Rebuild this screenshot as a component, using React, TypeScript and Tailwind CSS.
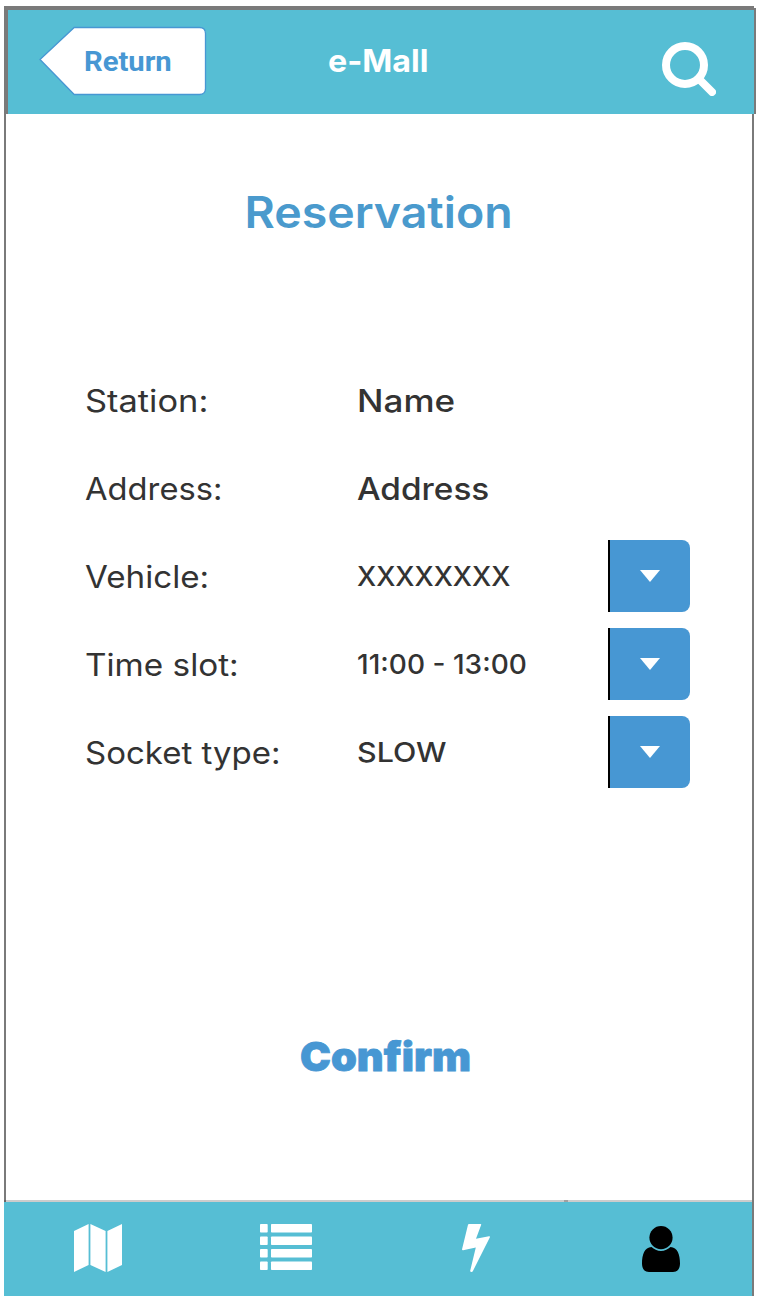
import React from "react";

function MapIcon() {
  return (
    <svg width="48" height="48" viewBox="0 0 48 48" fill="white">
      <path d="M0 7L14.6 0V41L0 48ZM16.4 0L31.6 7V48L16.4 41ZM33.4 7L48 0V41L33.4 48Z" />
    </svg>
  );
}

function ListIcon() {
  return (
    <svg width="52" height="46" viewBox="0 0 52 46" fill="white">
      {[0, 12.5, 25, 37.5].map((y) => (
        <g key={y}>
          <rect x="0" y={y} width="7.7" height="8.5" rx="0.8" />
          <rect x="11" y={y} width="41" height="8.5" rx="0.8" />
        </g>
      ))}
    </svg>
  );
}

function BoltIcon() {
  return (
    <svg width="28" height="48" viewBox="0 0 28 48" fill="white">
      <path d="M7 0H18.7Q19.5 0 19.2 .8L14 14.7L27 12.2Q28.3 12 27.9 13.2L10.8 47.3Q10.4 48 9.6 48Q8 48 8.2 46.8L13.8 23.5L1.1 26.2Q-.2 26.4 .1 25L6 .8Q6.2 0 7 0Z" />
    </svg>
  );
}

function UserIcon() {
  return (
    <svg width="38" height="46" viewBox="0 0 38 46" fill="black">
      <circle cx="19" cy="11.6" r="11.6" />
      <path d="M9.5 21C12 23.4 15.2 24.9 19 24.9S26 23.4 28.5 21C35.5 21.3 38 28.5 38 37.5C38 42.7 35.5 46 31 46H7C2.5 46 0 42.7 0 37.5C0 28.5 2.5 21.3 9.5 21Z" />
    </svg>
  );
}

type RowProps = { label: string; labelFit: string; value: string; valueFit: string; select?: boolean };

const rows: RowProps[] = [
  { label: "Station:", labelFit: "scale-x-[1.11]", value: "Name", valueFit: "scale-x-[1.13]" },
  { label: "Address:", labelFit: "scale-x-[1.055]", value: "Address", valueFit: "scale-x-[1.075]" },
  { label: "Vehicle:", labelFit: "scale-x-[1.07]", value: "XXXXXXXX", valueFit: "scale-x-[0.995]", select: true },
  { label: "Time slot:", labelFit: "scale-x-[1.075]", value: "11:00 - 13:00", valueFit: "scale-x-[1.02]", select: true },
  { label: "Socket type:", labelFit: "scale-x-[1.065]", value: "SLOW", valueFit: "scale-x-[1.105]", select: true },
];

function Row({ label, labelFit, value, valueFit, select }: RowProps) {
  return (
    <div className="flex h-[72px] items-center">
      <div className="w-[272px] pt-0.5">
        <span className={`inline-block origin-left whitespace-nowrap text-[31px] ${labelFit}`}>{label}</span>
      </div>
      <div className="w-[251px] pt-0.5">
        <span
          className={`inline-block origin-left whitespace-nowrap font-medium ${select ? "text-[27.5px]" : "text-[31px]"} ${valueFit}`}
        >
          {value}
        </span>
      </div>
      {select && (
        <button
          aria-label={label}
          className="flex h-[72px] w-[82px] items-center justify-center rounded-r-lg border-l-2 border-black bg-[#4797d3]"
        >
          <svg width="20" height="12" viewBox="0 0 20 12" fill="white">
            <path d="M0 0H20L10 12Z" />
          </svg>
        </button>
      )}
    </div>
  );
}

export default function App() {
  return (
    <div className="flex h-[1300px] w-[760px] flex-col bg-white pl-1 pt-1.5 font-['Inter',sans-serif] text-[#333]">
      <div className="h-0.5 w-[750px] bg-[#7a7a7a]" />
      <header className="flex h-[106px] w-[752px] border-l-4 border-r-2 border-t-2 border-[#7a7a7a] bg-[#56bed4]">
        <button className="relative ml-[31px] mt-4 h-[70px] w-[168px]">
          <svg width="168" height="70" viewBox="0 0 168 70" className="absolute inset-0">
            <path
              d="M35.2 1.5H160.5Q166.5 1.5 166.5 7.5V62.5Q166.5 68.5 160.5 68.5H35.2L1 33.5Z"
              fill="white"
              stroke="#4797d3"
              strokeWidth="1.3"
            />
          </svg>
          <span className="relative ml-[9px] inline-block scale-x-[1.025] pt-0.5 font-['Roboto',sans-serif] text-[28.5px] font-bold leading-[68px] text-[#4797d3]">
            Return
          </span>
        </button>
        <h1 className="ml-[121px] mt-[30px] w-[110px] text-[31px] font-bold leading-[42px] text-white">
          <span className="inline-block origin-left scale-x-[1.04]">e-Mall</span>
        </h1>
        <button aria-label="Search" className="ml-[224px] mt-8 h-[54px] w-[54px]">
          <svg width="54" height="54" viewBox="0 0 54 54" fill="none" stroke="white" strokeWidth="8" strokeLinecap="round">
            <circle cx="23" cy="23" r="19" />
            <path d="M37.5 37.5L50 50" />
          </svg>
        </button>
      </header>
      <main className="flex h-[1086px] w-[750px] flex-col border-x-2 border-[#7a7a7a]">
        <h2 className="mt-[68px] text-center text-[43.5px] font-semibold leading-[60px] text-[#4a9acd]">
          <span className="inline-block scale-x-[1.068]">Reservation</span>
        </h2>
        <div className="ml-[79px] mt-[122px] flex flex-col gap-4">
          {rows.map((r) => (
            <Row key={r.label} {...r} />
          ))}
        </div>
        <button className="ml-[294px] mt-[237px] w-[171px] text-left text-[40px] font-black leading-[64px] text-[#4797d3]">
          <span className="inline-block origin-left scale-x-[1.035] [-webkit-text-stroke:0.8px_#4797d3]">Confirm</span>
        </button>
      </main>
      <footer className="w-[750px] border-r-2 border-[#7a7a7a]">
        <div className="flex h-0.5 border-l-2 border-[#666] bg-[#ccc]">
          <div className="ml-[558px] w-1 bg-[#a0a0a0]" />
        </div>
        <nav className="flex h-[94px] items-start bg-[#56bed4] pt-[22px]">
          <div className="ml-[70px]"><MapIcon /></div>
          <div className="ml-[138px]"><ListIcon /></div>
          <div className="ml-[150px]"><BoltIcon /></div>
          <div className="ml-[152px] mt-0.5"><UserIcon /></div>
        </nav>
      </footer>
    </div>
  );
}
